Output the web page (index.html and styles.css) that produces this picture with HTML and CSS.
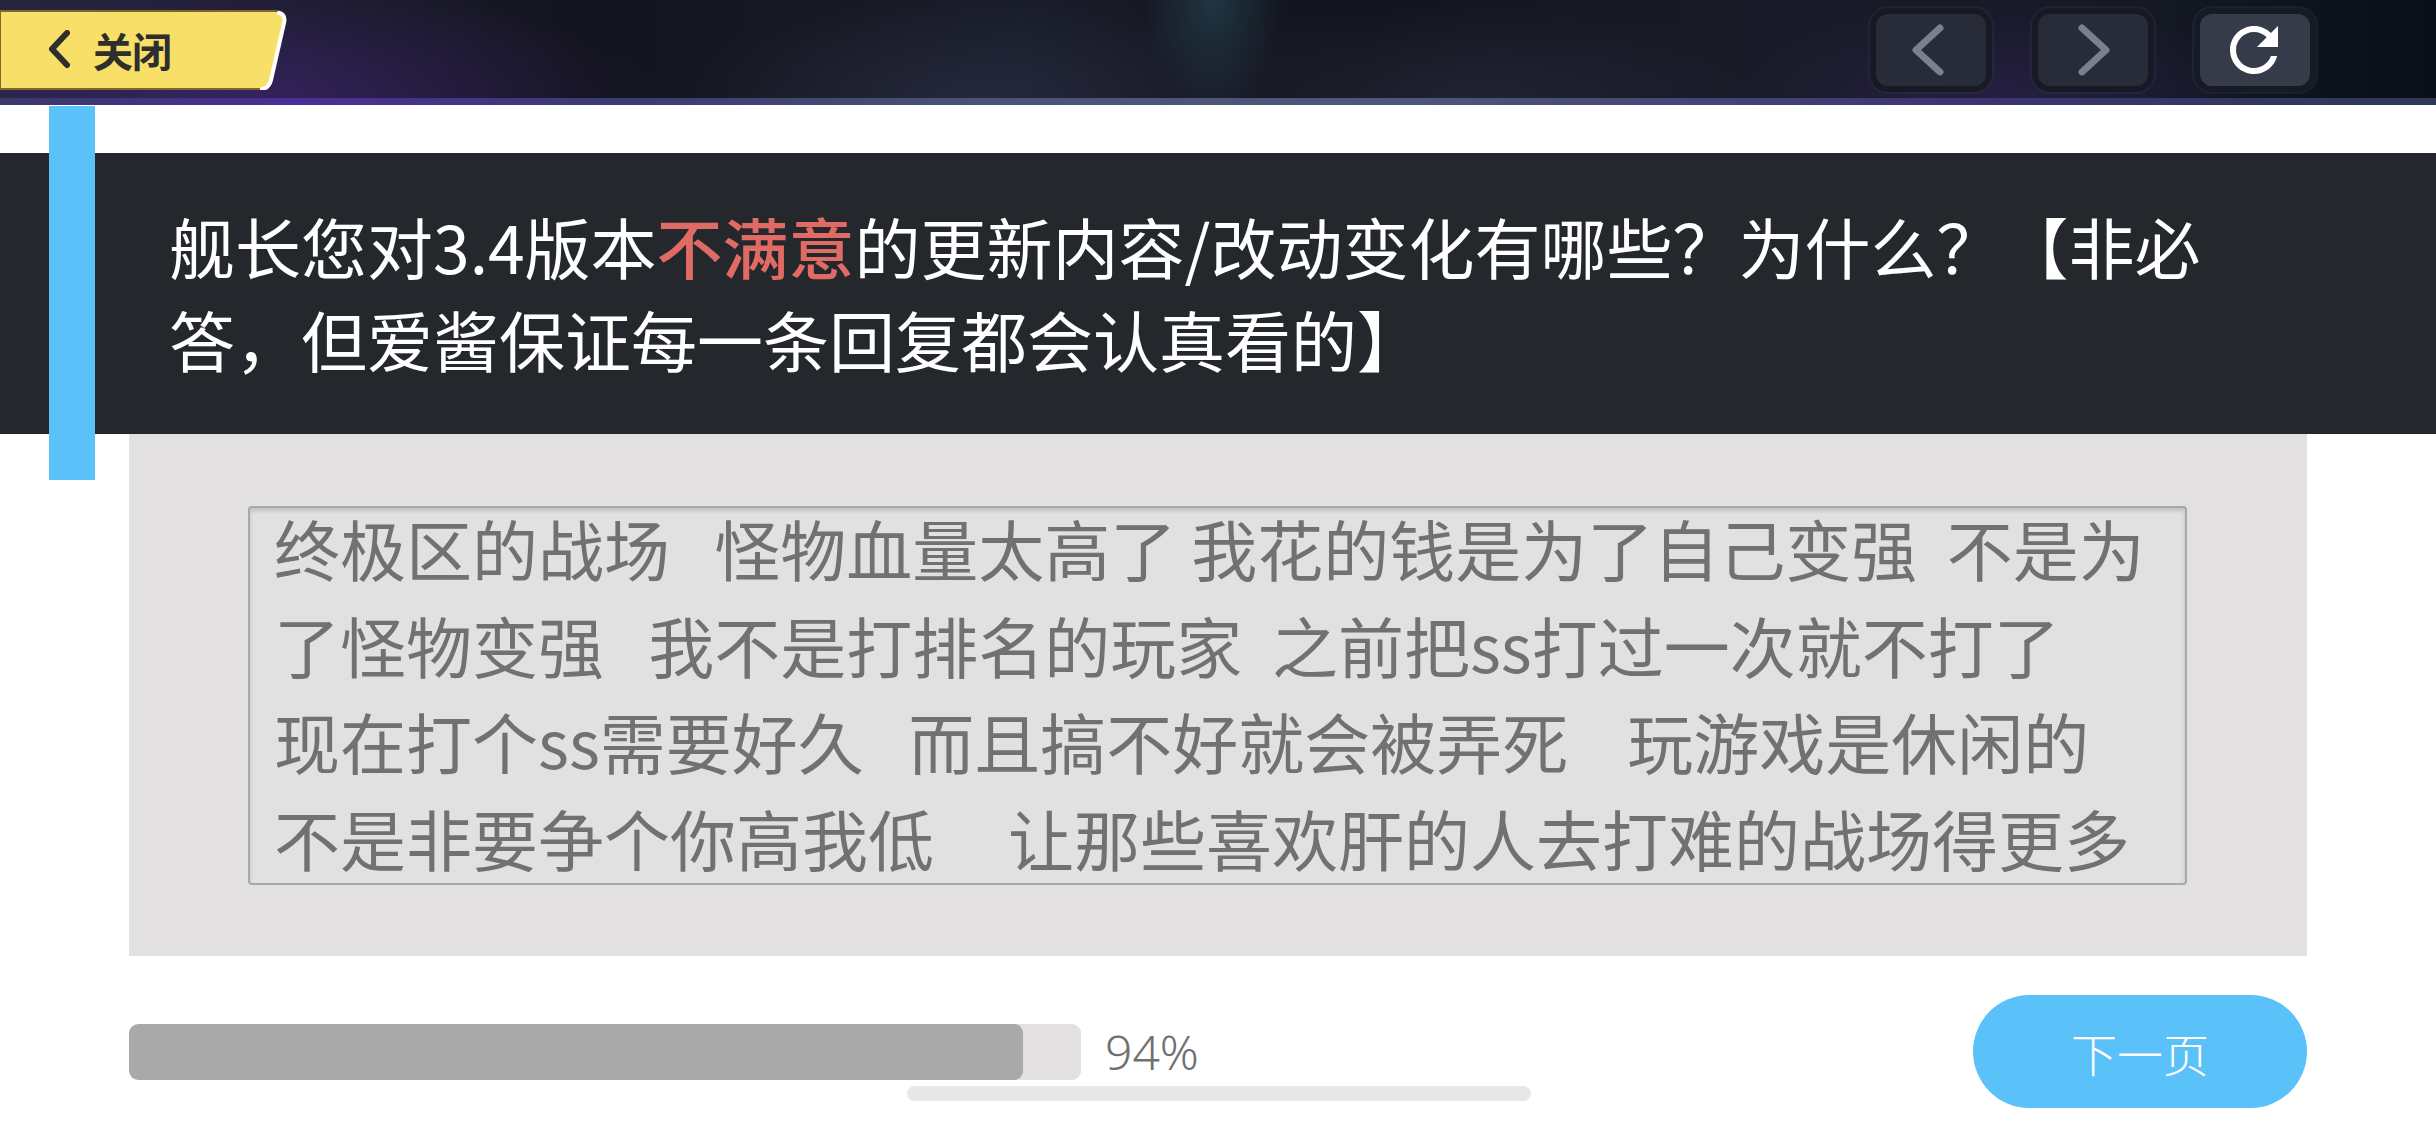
FILE: index.html
```html
<!DOCTYPE html>
<html lang="zh-CN">
<head>
<meta charset="utf-8">
<title>问卷</title>
<link rel="stylesheet" href="styles.css">
</head>
<body>
<div class="page">
  <header class="topbar">
    <div class="close-btn">
      <svg class="close-shape" width="290" height="80" viewBox="0 0 290 80">
        <path d="M0 1 H276 Q286 1 284 11 L271 70 Q269 79 260 79 H0 Z" fill="#f8df67" stroke="#7d6630" stroke-width="2"/>
        <path d="M279 3 Q286 5 284 13 L271 70 Q269 78 262 79" fill="none" stroke="#ffffff" stroke-width="4" stroke-linecap="round"/>
      </svg>
      <svg class="close-chev" width="30" height="40" viewBox="0 0 30 40">
        <polyline points="20,3 5,19 20,35" fill="none" stroke="#2e2e2e" stroke-width="6" stroke-linecap="round" stroke-linejoin="round"/>
      </svg>
      <span class="close-label">关闭</span>
    </div>
    <nav class="nav-group">
      <div class="nav-btn">
        <svg width="110" height="72" viewBox="0 0 110 72">
          <polyline points="64,14 40,36 64,58" fill="none" stroke="#7c808d" stroke-width="7" stroke-linecap="round" stroke-linejoin="round"/>
        </svg>
      </div>
      <div class="nav-btn">
        <svg width="110" height="72" viewBox="0 0 110 72">
          <polyline points="44,14 68,36 44,58" fill="none" stroke="#7c808d" stroke-width="7" stroke-linecap="round" stroke-linejoin="round"/>
        </svg>
      </div>
      <div class="nav-btn nav-btn-active">
        <svg width="110" height="72" viewBox="0 0 110 72">
          <g transform="translate(18,0) scale(3)">
            <path d="M17.65 6.35C16.2 4.9 14.21 4 12 4c-4.42 0-7.99 3.58-7.99 8s3.57 8 7.99 8c3.73 0 6.84-2.55 7.730-6h-2.08c-.82 2.33-3.040 4-5.65 4-3.31 0-6-2.69-6-6s2.69-6 6-6c1.66 0 3.14.69 4.22 1.78L13 11h7V4l-2.35 2.35z" fill="#ffffff"/>
          </g>
        </svg>
      </div>
    </nav>
  </header>
  <div class="topbar-strip"></div>

  <section class="question">
    <p class="question-text">舰长您对3.4版本<span class="hl">不满意</span>的更新内容/改动变化有哪些？为什么？【非必答，但爱酱保证每一条回复都会认真看的】</p>
  </section>

  <section class="answer-box">
    <div class="answer-field">
      <div class="answer-text">终极区的战场   怪物血量太高了 我花的钱是为了自己变强  不是为
了怪物变强   我不是打排名的玩家  之前把ss打过一次就不打了
现在打个ss需要好久   而且搞不好就会被弄死    玩游戏是休闲的
不是非要争个你高我低     让那些喜欢肝的人去打难的战场得更多</div>
    </div>
  </section>

  <footer class="footer">
    <div class="progress">
      <div class="progress-fill" style="width: 894px"></div>
    </div>
    <span class="progress-label">94%</span>
    <button class="next-btn">下一页</button>
  </footer>

  <div class="accent-bar"></div>
  <div class="home-indicator"></div>
</div>
</body>
</html>
```

FILE: styles.css
```css
* { box-sizing: border-box; }

html, body {
  margin: 0;
  padding: 0;
  background: #ffffff;
}

body {
  width: 2436px;
  height: 1125px;
  overflow: hidden;
  font-family: "Noto Sans CJK SC", "Noto Sans", sans-serif;
}

.page {
  position: relative;
  width: 2436px;
  height: 1125px;
  display: flex;
  flex-direction: column;
}

/* ---------- top bar ---------- */
.topbar {
  height: 98px;
  display: flex;
  align-items: flex-start;
  justify-content: space-between;
  padding-right: 126px;
  background:
    radial-gradient(ellipse 70px 110px at 49.8% 0%, rgba(40, 78, 92, 0.55), rgba(40, 78, 92, 0) 100%),
    radial-gradient(ellipse 420px 120px at 10% 100%, rgba(80, 40, 150, 0.45), rgba(80, 40, 150, 0) 100%),
    radial-gradient(ellipse 300px 100px at 40% 100%, rgba(60, 65, 95, 0.35), rgba(60, 65, 95, 0) 100%),
    radial-gradient(ellipse 300px 100px at 60% 100%, rgba(55, 60, 85, 0.35), rgba(55, 60, 85, 0) 100%),
    radial-gradient(ellipse 260px 100px at 82% 100%, rgba(70, 40, 120, 0.35), rgba(70, 40, 120, 0) 100%),
    linear-gradient(90deg, #24253a 0%, #1d1e2f 10%, #13141d 24%, #191c29 42%, #12131c 56%, #181b27 72%, #151925 88%, #0a0e16 100%);
}

.topbar-strip {
  height: 7px;
  background: linear-gradient(90deg, #3a3968 0%, #4a2f96 12%, #3b3c70 26%, #4a5677 42%, #4d5779 58%, #3c3572 80%, #2d3a56 100%);
}

.close-btn {
  position: relative;
  margin-top: 10px;
  width: 290px;
  height: 80px;
  display: flex;
  align-items: center;
  padding-left: 47px;
}

.close-shape {
  position: absolute;
  left: 0;
  top: 0;
}

.close-chev {
  position: relative;
  display: block;
}

.close-label {
  position: relative;
  margin-left: 16px;
  font-size: 40px;
  font-weight: 700;
  color: #2e2e2e;
  line-height: 1;
  letter-spacing: -1px;
}

.nav-group {
  display: flex;
  gap: 52px;
  margin-top: 14px;
}

.nav-btn {
  width: 110px;
  height: 72px;
  border-radius: 12px;
  background: #272c38;
  box-shadow: 0 0 0 6px rgba(22, 26, 36, 0.9), 0 0 0 8px rgba(50, 55, 70, 0.35);
}

.nav-btn svg { display: block; }

.nav-btn-active {
  background: #353b48;
}

/* ---------- question ---------- */
.question {
  margin-top: 48px;
  height: 281px;
  background: #24272c;
  padding: 46px 0 0 169px;
}

.question-text {
  margin: 0;
  width: 2060px;
  font-size: 66px;
  line-height: 93px;
  color: #ffffff;
}

.hl {
  color: #e06b64;
  font-weight: 500;
}

/* ---------- answer ---------- */
.answer-box {
  margin-left: 129px;
  width: 2178px;
  height: 522px;
  background: #e2e0e1;
  padding: 72px 120px 71px 119px;
}

.answer-field {
  height: 379px;
  border: 2px solid #a9a8a9;
  border-radius: 4px;
  background: #e2e1e2;
  box-shadow: inset 0 3px 4px rgba(0, 0, 0, 0.14);
  overflow: hidden;
  padding: 0 24px;
}

.answer-text {
  margin-top: -9px;
  white-space: pre;
  font-size: 66px;
  line-height: 96.5px;
  color: #727172;
}

/* ---------- footer ---------- */
.footer {
  margin-top: 39px;
  height: 113px;
  display: flex;
  align-items: center;
  padding: 0 129px;
}

.progress {
  width: 952px;
  height: 56px;
  border-radius: 9px;
  background: #e2e0e1;
  overflow: hidden;
}

.progress-fill {
  height: 100%;
  border-radius: 9px;
  background: #aaa9aa;
}

.progress-label {
  margin-left: 24px;
  font-family: "Noto Sans", sans-serif;
  font-weight: 300;
  font-size: 48px;
  color: #707070;
}

.next-btn {
  margin-left: auto;
  width: 334px;
  height: 113px;
  border: none;
  border-radius: 57px;
  background: #5bc1f9;
  color: #ffffff;
  font-family: "Noto Sans CJK SC", sans-serif;
  font-weight: 300;
  font-size: 46px;
  padding: 0;
}

/* ---------- overlays ---------- */
.accent-bar {
  position: absolute;
  left: 49px;
  top: 106px;
  width: 46px;
  height: 374px;
  background: #5bc1f9;
}

.home-indicator {
  position: absolute;
  left: 907px;
  top: 1086px;
  width: 624px;
  height: 15px;
  border-radius: 8px;
  background: #e7e7e9;
}
```
